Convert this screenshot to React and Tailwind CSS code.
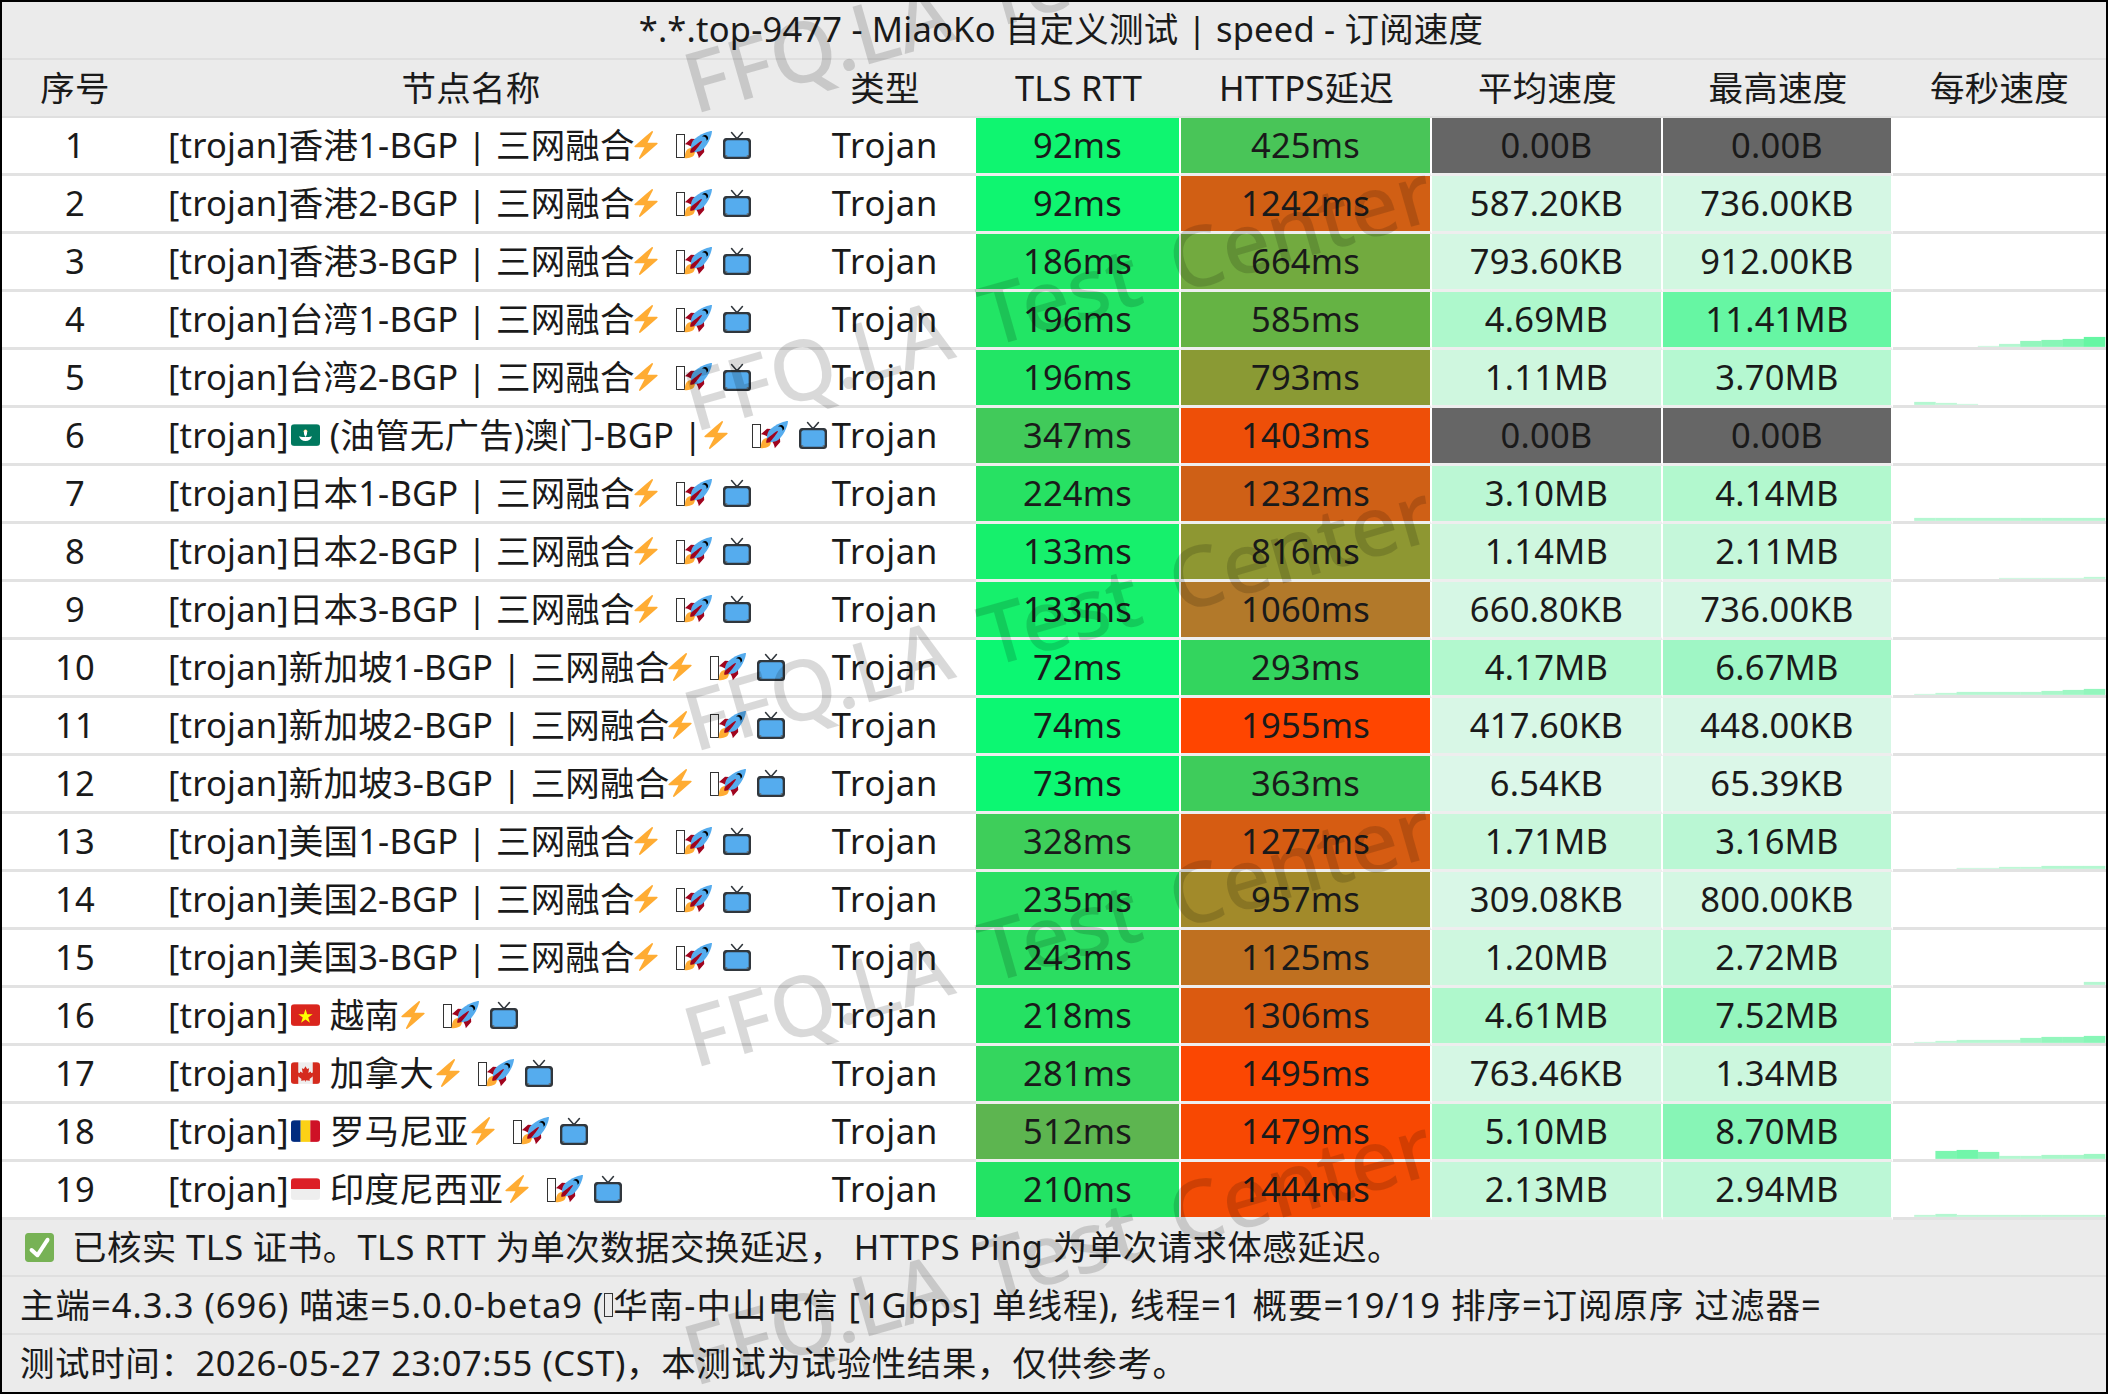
import React from "react";

const Zap = () => (
  <svg viewBox="0 0 36 36" className="w-[28px] h-[28px] shrink-0">
    <path fill="#FFAC33" d="M32.938 15.651C32.792 15.26 32.418 15 32 15H19.925L26.89 1.458c.219-.426.106-.947-.271-1.243C26.437.071 26.218 0 26 0c-.233 0-.466.082-.653.243L18 6.588 3.347 19.243c-.316.273-.43.714-.284 1.105S3.582 21 4 21h12.075L9.11 34.542c-.219.426-.106.947.271 1.243.182.144.401.215.619.215.233 0 .466-.082.653-.243L18 29.412l14.653-12.655c.317-.273.43-.714.285-1.106z" />
  </svg>
);

const Rocket = () => (
  <svg viewBox="0 0 36 36" className="w-[28px] h-[28px] shrink-0">
    <path fill="#A0041E" d="M1 17l8-7 16 1 1 16-7 8s.001-5.999-6-12-12-6-12-6z" />
    <path fill="#FFAC33" d="M.973 35s-.036-7.979 2.985-11S15 21.187 15 21.187 14.999 29 11.999 32c-3 3-11.026 3-11.026 3z" />
    <path fill="#FFCC4D" d="M8.999 27s-.001-4 1-5 5-.999 5-.999 0 3.999-1 5c-1 1-5 1-5 1z" />
    <path fill="#55ACEE" d="M35.999 0s-10 0-22 10c-6 5-6 14-4 16s11 2 16-4c10-12 10-22 10-22z" />
    <path fill="#000" d="M26.999 5c-1.623 0-3.013.971-3.641 2.36.502-.227 1.055-.36 1.641-.36 2.209 0 4 1.791 4 4 0 .586-.133 1.139-.359 1.64 1.389-.627 2.359-2.017 2.359-3.64 0-2.209-1.791-4-4-4z" />
    <path fill="#A0041E" d="M8 28s0-4 1-5 13.001-10.999 14-10-9.001 13-10.001 14S8 28 8 28z" />
  </svg>
);

const Tv = () => (
  <svg viewBox="0 0 36 36" className="w-[28px] h-[28px] shrink-0">
    <path fill="none" stroke="#31373D" strokeWidth="2" strokeLinecap="round" d="M18 10L11 2M18 10L25 2" />
    <path fill="#31373D" d="M36 32c0 2.209-1.791 4-4 4H4c-2.209 0-4-1.791-4-4V13c0-2.209 1.791-4 4-4h28c2.209 0 4 1.791 4 4v19z" />
    <path fill="#55ACEE" d="M33 30c0 1.657-1.343 3-3 3H6c-1.657 0-3-1.343-3-3V15c0-1.657 1.343-3 3-3h24c1.657 0 3 1.343 3 3v15z" />
    <circle cx="4.5" cy="32" r="1.2" fill="#66757F" />
    <circle cx="31.5" cy="32" r="1.2" fill="#66757F" />
  </svg>
);

// the tofu box that sits in front of the rocket
const Tofu = () => (
  <span className="inline-block w-[9px] h-[24px] border-[1.5px] border-[#333] shrink-0 -mr-[1px] mt-[1px]"></span>
);

const Flag = ({ code }) => (
  <svg viewBox="0 0 36 27" className="w-[29px] h-[22px] shrink-0 ml-[2px] mr-[2px]">
    <defs>
      <clipPath id={"clip-" + code}>
        <rect width="36" height="27" rx="4" />
      </clipPath>
    </defs>
    <g clipPath={"url(#clip-" + code + ")"}>
      {code === "mo" && (
        <>
          <rect width="36" height="27" fill="#00785E" />
          <circle cx="18" cy="9" r="2.4" fill="#FFD983" />
          <path fill="#fff" d="M10 15c3 1 5 1 8 1s5 0 8-1c-1 4-4 6-8 6s-7-2-8-6z" />
          <path fill="#fff" d="M18 7c2 2 3 5 0 9-3-4-2-7 0-9z" />
        </>
      )}
      {code === "vn" && (
        <>
          <rect width="36" height="27" fill="#DA251D" />
          <path fill="#FFFF00" d="M18 6l2.1 6.5h6.8l-5.5 4 2.1 6.5-5.5-4-5.5 4 2.1-6.5-5.5-4h6.8z" />
        </>
      )}
      {code === "ca" && (
        <>
          <rect width="36" height="27" fill="#EEE" />
          <rect width="9" height="27" fill="#D52B1E" />
          <rect x="27" width="9" height="27" fill="#D52B1E" />
          <path fill="#D52B1E" d="M18 5l2 3.5 2.5-1-1 6 3-2 .5 2 3-.5-1 3.5 1 .5-5 4 .5 2-5-.5V24h-1v-1.500l-5 .5.5-2-5-4 1-.5-1-3.500 3 .5.5-2 3 2-1-6 2.500 1z" />
        </>
      )}
      {code === "ro" && (
        <>
          <rect width="12" height="27" fill="#002B7F" />
          <rect x="12" width="12" height="27" fill="#FCD116" />
          <rect x="24" width="12" height="27" fill="#CE1126" />
        </>
      )}
      {code === "id" && (
        <>
          <rect width="36" height="27" fill="#EEE" />
          <rect width="36" height="13.500" fill="#DC1F26" />
        </>
      )}
    </g>
  </svg>
);

const CheckBox = () => (
  <svg viewBox="0 0 36 36" className="w-[29px] h-[29px] shrink-0">
    <path fill="#77B255" d="M36 32c0 2.209-1.791 4-4 4H4c-2.209 0-4-1.791-4-4V4c0-2.209 1.791-4 4-4h28c2.209 0 4 1.791 4 4v28z" />
    <path fill="#FFF" d="M29.28 6.362c-1.156-.751-2.704-.422-3.458.736L14.936 23.877l-5.029-4.65c-1.014-.938-2.596-.875-3.533.138-.937 1.014-.875 2.596.139 3.533l7.209 6.666c.48.445 1.09.665 1.696.665.673 0 1.534-.282 2.099-1.139.332-.506 12.5-19.27 12.5-19.27.751-1.159.421-2.707-.737-3.458z" />
  </svg>
);

const rows = [
  { name: "香港1-BGP | 三网融合", tls: "92ms", tlsBg: "bg-[#0ff570]", https: "425ms", httpsBg: "bg-[#49c558]", avg: "0.00B", avgBg: "bg-[#666666]", max: "0.00B", maxBg: "bg-[#666666]", graph: [] },
  { name: "香港2-BGP | 三网融合", tls: "92ms", tlsBg: "bg-[#0ff570]", https: "1242ms", httpsBg: "bg-[#d15f14]", avg: "587.20KB", avgBg: "bg-[#d5f7e4]", max: "736.00KB", maxBg: "bg-[#d5f7e4]", graph: [] },
  { name: "香港3-BGP | 三网融合", tls: "186ms", tlsBg: "bg-[#20e766]", https: "664ms", httpsBg: "bg-[#72aa3f]", avg: "793.60KB", avgBg: "bg-[#d4f7e3]", max: "912.00KB", maxBg: "bg-[#d2f7e1]", graph: [] },
  { name: "台湾1-BGP | 三网融合", tls: "196ms", tlsBg: "bg-[#22e565]", https: "585ms", httpsBg: "bg-[#65b344]", avg: "4.69MB", avgBg: "bg-[#aef8cc]", max: "11.41MB", maxBg: "bg-[#66f6a3]", graph: [0, 0, 0, 0, 1, 3, 6, 7, 8, 10] },
  { name: "台湾2-BGP | 三网融合", tls: "196ms", tlsBg: "bg-[#22e565]", https: "793ms", httpsBg: "bg-[#8a9a34]", avg: "1.11MB", avgBg: "bg-[#cff7df]", max: "3.70MB", maxBg: "bg-[#b5f8d1]", graph: [0, 3, 2, 1, 0, 0, 0, 0, 0, 0] },
  { name: "(油管无广告)澳门-BGP |", flag: "mo", tls: "347ms", tlsBg: "bg-[#41ca5a]", https: "1403ms", httpsBg: "bg-[#ee4f08]", avg: "0.00B", avgBg: "bg-[#666666]", max: "0.00B", maxBg: "bg-[#666666]", graph: [], wide: true },
  { name: "日本1-BGP | 三网融合", tls: "224ms", tlsBg: "bg-[#27e163]", https: "1232ms", httpsBg: "bg-[#cf6016]", avg: "3.10MB", avgBg: "bg-[#bbf7d4]", max: "4.14MB", maxBg: "bg-[#b2f8ce]", graph: [0, 3, 3, 3, 3, 3, 3, 3, 3, 3] },
  { name: "日本2-BGP | 三网融合", tls: "133ms", tlsBg: "bg-[#16f06c]", https: "816ms", httpsBg: "bg-[#8e9732]", avg: "1.14MB", avgBg: "bg-[#cff7df]", max: "2.11MB", maxBg: "bg-[#c5f7da]", graph: [0, 0, 0, 0, 0, 1, 1, 1, 1, 2] },
  { name: "日本3-BGP | 三网融合", tls: "133ms", tlsBg: "bg-[#16f06c]", https: "1060ms", httpsBg: "bg-[#b2792a]", avg: "660.80KB", avgBg: "bg-[#d6f7e5]", max: "736.00KB", maxBg: "bg-[#d5f7e4]", graph: [] },
  { name: "新加坡1-BGP | 三网融合", tls: "72ms", tlsBg: "bg-[#0cf772]", https: "293ms", httpsBg: "bg-[#33d55e]", avg: "4.17MB", avgBg: "bg-[#b2f8ce]", max: "6.67MB", maxBg: "bg-[#9ff6c5]", graph: [0, 1, 2, 3, 3, 3, 3, 4, 5, 6] },
  { name: "新加坡2-BGP | 三网融合", tls: "74ms", tlsBg: "bg-[#0cf772]", https: "1955ms", httpsBg: "bg-[#ff4500]", avg: "417.60KB", avgBg: "bg-[#d8f7e6]", max: "448.00KB", maxBg: "bg-[#d7f7e6]", graph: [] },
  { name: "新加坡3-BGP | 三网融合", tls: "73ms", tlsBg: "bg-[#0cf772]", https: "363ms", httpsBg: "bg-[#3ecc5b]", avg: "6.54KB", avgBg: "bg-[#dcf7e9]", max: "65.39KB", maxBg: "bg-[#dbf7e8]", graph: [] },
  { name: "美国1-BGP | 三网融合", tls: "328ms", tlsBg: "bg-[#3ece5a]", https: "1277ms", httpsBg: "bg-[#d65c12]", avg: "1.71MB", avgBg: "bg-[#caf7dc]", max: "3.16MB", maxBg: "bg-[#baf7d4]", graph: [0, 0, 0, 1, 1, 2, 2, 3, 3, 3] },
  { name: "美国2-BGP | 三网融合", tls: "235ms", tlsBg: "bg-[#29df62]", https: "957ms", httpsBg: "bg-[#a28a2a]", avg: "309.08KB", avgBg: "bg-[#d9f7e7]", max: "800.00KB", maxBg: "bg-[#d4f7e3]", graph: [] },
  { name: "美国3-BGP | 三网融合", tls: "243ms", tlsBg: "bg-[#2bdd61]", https: "1125ms", httpsBg: "bg-[#bf7020]", avg: "1.20MB", avgBg: "bg-[#cef7df]", max: "2.72MB", maxBg: "bg-[#bff7d7]", graph: [0, 0, 0, 0, 0, 0, 0, 0, 0, 3] },
  { name: "越南", flag: "vn", tls: "218ms", tlsBg: "bg-[#25e163]", https: "1306ms", httpsBg: "bg-[#db5a10]", avg: "4.61MB", avgBg: "bg-[#aff8cc]", max: "7.52MB", maxBg: "bg-[#95f5bd]", graph: [0, 1, 2, 3, 3, 3, 5, 6, 6, 7] },
  { name: "加拿大", flag: "ca", tls: "281ms", tlsBg: "bg-[#34d65e]", https: "1495ms", httpsBg: "bg-[#fb4702]", avg: "763.46KB", avgBg: "bg-[#d5f7e4]", max: "1.34MB", maxBg: "bg-[#ccf7de]", graph: [] },
  { name: "罗马尼亚", flag: "ro", tls: "512ms", tlsBg: "bg-[#5db550]", https: "1479ms", httpsBg: "bg-[#f84802]", avg: "5.10MB", avgBg: "bg-[#abf8c9]", max: "8.70MB", maxBg: "bg-[#87f5b6]", graph: [0, 0, 8, 9, 7, 3, 3, 4, 4, 5] },
  { name: "印度尼西亚", flag: "id", tls: "210ms", tlsBg: "bg-[#23e364]", https: "1444ms", httpsBg: "bg-[#f34c05]", avg: "2.13MB", avgBg: "bg-[#c5f7da]", max: "2.94MB", maxBg: "bg-[#bcf7d6]", graph: [0, 2, 3, 2, 2, 2, 2, 2, 2, 2] },
];

const headers = ["序号", "节点名称", "类型", "TLS RTT", "HTTPS延迟", "平均速度", "最高速度", "每秒速度"];

const marks = [
  "top-[40px]",
  "top-[358px]",
  "top-[678px]",
  "top-[994px]",
  "top-[1312px]",
];

const grid = "grid grid-cols-[146px_646px_182px_205px_251px_231px_230px_213px]";
const plain = "flex items-center justify-center pb-[1px] border-b-[3px] border-[#e2e2e2]";
const filled = "flex items-center justify-center pb-[1px] border-b-[3px] border-r-2 border-b-[#eeeeee] border-r-white";

// colour of a step in the per second graph, stronger as it gets taller
function barColor(h) {
  const t = Math.min(h / 10, 1);
  const r = Math.round(214 - 112 * t);
  const g = Math.round(247 - 1 * t);
  const b = Math.round(228 - 65 * t);
  return `rgb(${r},${g},${b})`;
}

const SpeedGraph = ({ data }) => (
  <svg viewBox="0 0 214 55" className="block w-full h-[55px]">
    {data.map((h, i) =>
      h > 0 ? <rect key={i} x={i * 21.3} y={55 - h} width="21.6" height={h} fill={barColor(h)} /> : null
    )}
  </svg>
);

const NameCell = ({ row }) => (
  <div className={plain + " !justify-start pl-5 whitespace-nowrap"}>
    <span>[trojan]</span>
    {row.flag && <Flag code={row.flag} />}
    <span className={row.flag ? "ml-[8px]" : "-mr-[3px]"}>{row.name}</span>
    <Zap />
    <span className={row.wide ? "w-[22px] shrink-0" : "w-[16px] shrink-0"}></span>
    <Tofu />
    <Rocket />
    <span className="w-[11px] shrink-0"></span>
    <Tv />
  </div>
);

export default function App() {
  return (
    <div
      lang="zh-CN"
      className="relative w-[2108px] h-[1394px] bg-black p-[2px] overflow-hidden font-['Noto_Sans','Noto_Sans_CJK_SC',sans-serif] text-[34.5px] leading-none tracking-[0.2px] text-[#1a1a1a]"
    >
      <div className="relative bg-white h-[1390px] overflow-hidden">
        <div className="flex items-center justify-center h-[58px] pl-[14px] pb-[2px] bg-[#ebebeb] border-b-2 border-[#dfdfdf]">
          *.*.top-9477 - MiaoKo 自定义测试 | speed - 订阅速度
        </div>
        <div className={grid + " h-[58px] bg-[#ebebeb]"}>
          {headers.map((h) => (
            <div key={h} className="flex items-center justify-center border-b-2 border-[#dfdfdf]">
              {h}
            </div>
          ))}
        </div>
        {rows.map((row, i) => (
          <div key={i} className={grid + " h-[58px]"}>
            <div className={plain}>{i + 1}</div>
            <NameCell row={row} />
            <div className={plain + " tracking-[0.8px]"}>Trojan</div>
            <div className={filled + " " + row.tlsBg}>{row.tls}</div>
            <div className={filled + " " + row.httpsBg}>{row.https}</div>
            <div className={filled + " " + row.avgBg}>{row.avg}</div>
            <div className={filled + " " + row.maxBg}>{row.max}</div>
            <div className="border-b-[3px] border-[#e2e2e2]">
              <SpeedGraph data={row.graph} />
            </div>
          </div>
        ))}
        <div className="bg-[#ebebeb]">
          <div className="flex items-center h-[57px] pl-[23px] gap-[18px] border-b-2 border-[#dfdfdf] tracking-[0.4px]">
            <CheckBox />
            <span>已核实 TLS 证书。TLS RTT 为单次数据交换延迟， HTTPS Ping 为单次请求体感延迟。</span>
          </div>
          <div className="flex items-center h-[58px] pl-[18px] border-b-2 border-[#dfdfdf] whitespace-pre tracking-[1px]">
            <span>主端=4.3.3 (696) 喵速=5.0.0-beta9 (</span>
            <span className="inline-block w-[9px] h-[24px] border-[1.5px] border-[#333]"></span>
            <span>华南-中山电信 [1Gbps] 单线程), 线程=1 概要=19/19 排序=订阅原序 过滤器=</span>
          </div>
          <div className="flex items-center h-[57px] pl-[18px] tracking-[0.6px]">
            测试时间：2026-05-27 23:07:55 (CST)，本测试为试验性结果，仅供参考。
          </div>
        </div>
      </div>
      {marks.map((m) => (
        <div
          key={m}
          className={"absolute left-[697px] pointer-events-none whitespace-nowrap origin-bottom-left -rotate-[16deg] font-['Noto_Sans',sans-serif] font-medium text-[84px] tracking-normal [word-spacing:12px] text-black/15 " + m}
        >
          FFQ.LA Test Center
        </div>
      ))}
    </div>
  );
}
